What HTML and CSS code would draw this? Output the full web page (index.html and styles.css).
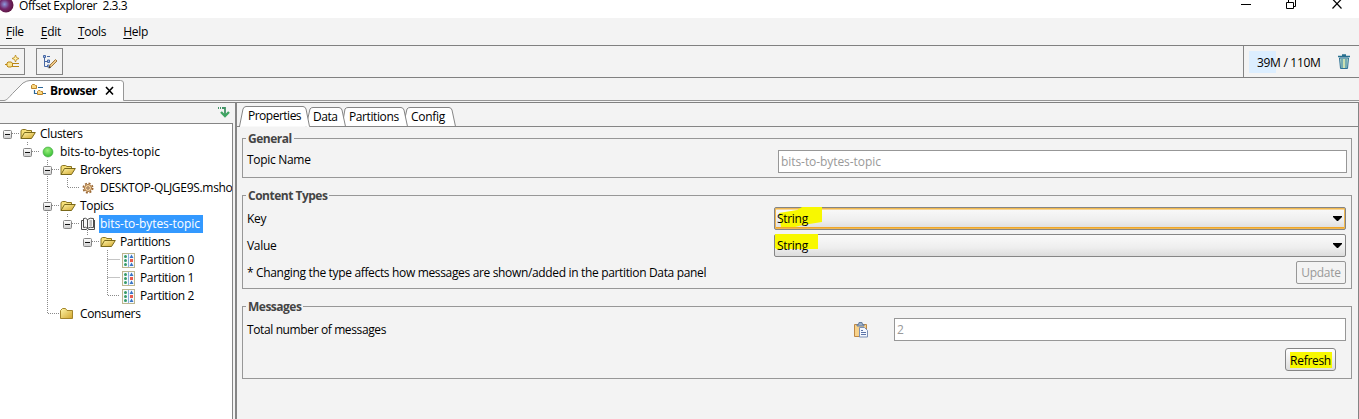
FILE: index.html
```html
<!DOCTYPE html>
<html lang="en">
<head>
<meta charset="utf-8">
<title>Offset Explorer 2.3.3</title>
<link rel="stylesheet" href="styles.css">
</head>
<body>
<svg width="0" height="0" class="defs">
  <defs>
    <linearGradient id="gold" x1="0" y1="0" x2="1" y2="1"><stop offset="0" stop-color="#fff6a8"/><stop offset="1" stop-color="#d1a52c"/></linearGradient>
    <linearGradient id="box" x1="0" y1="0" x2="0" y2="1"><stop offset="0" stop-color="#fff"/><stop offset="1" stop-color="#ccc"/></linearGradient>
    <radialGradient id="orb" cx=".4" cy=".45" r=".65"><stop offset="0" stop-color="#8d9ade"/><stop offset=".5" stop-color="#74276b"/><stop offset="1" stop-color="#571036"/></radialGradient>
    <radialGradient id="green" cx=".45" cy=".35" r=".7"><stop offset="0" stop-color="#9bf07c"/><stop offset="1" stop-color="#2eb82e"/></radialGradient>
    <symbol id="open" viewBox="0 0 16 12"><path d="M1 10.500V2.500L2.500 1.500H5.500L7 2.500H11.500V5" fill="#f5df78" stroke="#8a7420"/><path d="M1 10.500L4.500 4.500H15.300L11.500 10.500Z" fill="url(#gold)" stroke="#796819"/></symbol>
    <symbol id="closed" viewBox="0 0 14 12"><path d="M.5 10.500V2.500L2.500 .5H5.500L7 2.500H12.500V10.500Z" fill="url(#gold)" stroke="#a3852b"/></symbol>
    <symbol id="minus" viewBox="0 0 9 9"><rect x=".5" y=".5" width="8" height="8" rx="1" fill="url(#box)" stroke="#858585"/><path d="M2 4.500H7" stroke="#111"/></symbol>
    <symbol id="part" viewBox="0 0 13 15"><rect x=".5" y=".5" width="12" height="14" fill="#f6fafd" stroke="#bdb68e"/><path d="M6.500 1V14" stroke="#8bb0dc"/><g fill="#369b69"><circle cx="3.500" cy="3.500" r="1.500"/><circle cx="3.500" cy="7.500" r="1.500"/><circle cx="3.500" cy="11.500" r="1.500"/></g><path d="M9.500 1.500L11.500 5H7.500ZM9.500 9.500L11.500 13H7.500Z" fill="#3974c5"/><path d="M8 6H11V9H8Z" fill="#e85b4f"/></symbol>
  </defs>
</svg>
<div class="window">
  <header class="titlebar">
    <svg class="orb" width="16" height="18"><circle cx="6" cy="5" r="7.500" fill="url(#orb)"/></svg>
    <span class="title">Offset Explorer&nbsp; 2.3.3</span>
    <svg class="controls" width="119" height="18" fill="none" stroke="#000"><path d="M1 4.500H11"/><path d="M46.500 2.500H53.500V8.500H46.500ZM48.500 2V0M55.500 0V6.500H54"/><path d="M92.500 -1L101.500 8.500M101.500 -1L92.500 8.500" stroke-width="1.200"/></svg>
  </header>
  <nav class="menu"><span><u>F</u>ile</span><span><u>E</u>dit</span><span><u>T</u>ools</span><span><u>H</u>elp</span></nav>
  <div class="toolbar">
    <button class="tool first"><svg width="16" height="16" viewBox="0 0 16 16"><path d="M1 10.500H4M8 9.500H15M8 12.500H15" stroke="#b98618" fill="none"/><path d="M4 8H7L8.500 9V12L7 13H4L3 12V9Z" fill="#fbe58f" stroke="#b98618"/><path d="M11.500 1L12.500 3.500L15 4.500L12.500 5.500L11.500 8L10.500 5.500L8 4.500L10.500 3.500Z" fill="#fff1a8" stroke="#b98618" stroke-width=".8"/></svg></button>
    <button class="tool second"><svg width="16" height="16" viewBox="0 0 16 16"><path d="M2.500 3V12.500H6M2.500 7.500H6M5 2.500H8" stroke="#4868a4" fill="none"/><path d="M1.500 1.500H3.500V3.500H1.500ZM5.500 6H7.500V8.500H5.500ZM5.500 11H7.500V13H5.500Z" fill="#a3bde5" stroke="#4868a4"/><path d="M7 14L8 11L13.500 5.500L15 7L9.500 12.500Z" fill="#efc987" stroke="#a1793f"/><path d="M6.500 14.500L7.500 12L9 13.500Z" fill="#333"/></svg></button>
    <div class="memory"><span class="meter">39M / 110M</span><svg width="12" height="16" viewBox="0 0 12 16"><path d="M1.500 4H10.500L9.500 14.500H2.500Z" fill="#b5dacb" stroke="#2d7196"/><path d="M4 5V14M8 5V14" stroke="#397f9b"/><path d="M6 5V14" stroke="#e2e99a"/><path d="M0 2.500H12M4 1H8" stroke="#28708f" stroke-width="1.500"/></svg></div>
  </div>
  <div class="viewbar">
    <svg class="tabshape" width="1359" height="23"><path d="M4 22.500C7 22.500 10 18 14 14L23 5Q27 2.500 30 2.500H120.500Q123.500 2.500 123.500 5V22.500Z" fill="#fff"/><path d="M0 22.500H4C7 22.500 10 18 14 14L23 5Q27 2.500 30 2.500H120.500Q123.500 2.500 123.500 5V22.500H1359" fill="none" stroke="#979797"/></svg>
    <div class="viewtab"><svg class="hier" width="16" height="13" viewBox="0 0 16 13"><path d="M7 3.500H12M3.500 6V9.500H6M12 9.500H15" stroke="#2b6799" stroke-width="1.200" fill="none"/><path d="M.5 1.500L1.500 .5H3.500L4.500 1.500H5.500V4.500H.5ZM6.500 7.500L7.500 6.500H9L10 7.500H11.500V10.500H6.500Z" fill="#fbd87e" stroke="#bb832b"/></svg><b>Browser</b><svg width="10" height="10"><path d="M1 1L8 8.500M8 1L1 8.500" stroke="#000" stroke-width="1.600"/></svg></div>
  </div>
  <main class="main">
    <aside class="side">
      <div class="sidehead"><svg width="14" height="13" viewBox="0 0 14 13"><path d="M1 2H2M3 2H4M5 2H8V9" fill="none" stroke="#429365" stroke-width="1.800"/><path d="M4 6L8 10L12 6" fill="none" stroke="#3ea561" stroke-width="2.400"/></svg></div>
      <div class="tree">
        <svg class="connectors" width="231" height="200" fill="none" stroke="#8a8a8a" stroke-dasharray="1 1"><path d="M12 9.500H20M27.500 18V22M32 27.500H40M47.500 36V189.500H60M52 45.500H60M67.500 54V63.500H80M52 81.500H60M67.500 90V94M72 99.500H80M87.500 108V112M92 117.500H100M107.500 126V171.500H120M107.500 135.500H120M107.500 153.500H120"/></svg>
        <div class="row l0"><svg class="ex"><use href="#minus"/></svg><svg class="ic f"><use href="#open"/></svg><span>Clusters</span></div>
        <div class="row l1"><svg class="ex"><use href="#minus"/></svg><svg class="ic" viewBox="0 0 16 16"><circle cx="8" cy="8" r="5" fill="url(#green)" stroke="#45a745" stroke-width=".6"/></svg><span class="wide">bits-to-bytes-topic</span></div>
        <div class="row l2"><svg class="ex"><use href="#minus"/></svg><svg class="ic f"><use href="#open"/></svg><span>Brokers</span></div>
        <div class="row l3"><i class="ex"></i><svg class="ic" viewBox="0 0 16 16"><circle cx="8" cy="8" r="4.700" fill="none" stroke="#9a6732" stroke-width="1.600" stroke-dasharray="2 1.690"/><circle cx="8" cy="8" r="3.500" fill="#f6d7a5" stroke="#a36e38"/><circle cx="8" cy="8" r="1.200" fill="#fff" stroke="#8c5929"/></svg><span class="host">DESKTOP-QLJGE9S.msho</span></div>
        <div class="row l2"><svg class="ex"><use href="#minus"/></svg><svg class="ic f"><use href="#open"/></svg><span>Topics</span></div>
        <div class="row l3"><svg class="ex"><use href="#minus"/></svg><svg class="ic" viewBox="0 0 16 16"><path d="M7.500 3.500Q5.500 1.500 3.500 2.500V11.500Q5.500 10.500 7.500 12.500Q10 10.500 13.500 11.500V2.500Q10 1.500 7.500 3.500V12.500M3 4.500H1.500V13.500H6.500L7.500 14.500L8.500 13.500H14.500V4" fill="#f8f8f8" stroke="#4d4d4d"/><path d="M9.500 5H12M9.500 7H12M9.500 9H12" stroke="#888"/></svg><span class="selected wide">bits-to-bytes-topic</span></div>
        <div class="row l4"><svg class="ex"><use href="#minus"/></svg><svg class="ic f"><use href="#open"/></svg><span>Partitions</span></div>
        <div class="row l5"><i class="ex"></i><svg class="ic p"><use href="#part"/></svg><span>Partition 0</span></div>
        <div class="row l5"><i class="ex"></i><svg class="ic p"><use href="#part"/></svg><span>Partition 1</span></div>
        <div class="row l5"><i class="ex"></i><svg class="ic p"><use href="#part"/></svg><span>Partition 2</span></div>
        <div class="row l2"><i class="ex"></i><svg class="ic c"><use href="#closed"/></svg><span>Consumers</span></div>
      </div>
    </aside>
    <section class="panel">
      <div class="tabs">
        <svg class="tabshape" width="1121" height="24" stroke="#858585"><g fill="#fff"><path d="M166 23.500L170 6Q171 4.500 173 4.500H212Q214 4.500 215 7L218.500 23.500"/><path d="M105 23.500L108 6Q109 4.500 111 4.500H164Q166 4.500 167 7L170.500 23.500"/><path d="M69 23.500L73 6Q74 4.500 76 4.500H102Q104 4.500 105 7L108.500 23.500"/><path d="M2.500 23.500L6 6Q7 3.500 9 3.500H66Q68 3.500 69 6L72.500 23.500"/></g><path d="M0 23.500H3M72.500 23.500H1121" fill="none"/></svg>
        <span class="tab t1">Properties</span><span class="tab t2">Data</span><span class="tab t3">Partitions</span><span class="tab t4">Config</span>
      </div>
      <div class="groups">
        <fieldset class="general"><legend>General</legend><div class="line"><label class="topic-label">Topic Name</label><div class="input topic wide">bits-to-bytes-topic</div></div></fieldset>
        <fieldset class="types"><legend>Content Types</legend>
          <div class="line"><label>Key</label><div class="select focused"><svg class="mark" width="47" height="21"><path d="M4 6L22 3L27 0H47V15L28 18L20 20H6Z" fill="#f8f800"/></svg><span>String</span><svg class="arrow" width="9" height="5"><path d="M0 0H9V1L5 5H4L0 1Z"/></svg></div></div>
          <div class="line second-line"><label>Value</label><div class="select"><svg class="mark" width="43" height="16"><path d="M0 0H43V15H7L3 16L0 14Z" fill="#f8f800"/></svg><span>String</span><svg class="arrow" width="9" height="5"><path d="M0 0H9V1L5 5H4L0 1Z"/></svg></div></div>
          <div class="line third-line"><label class="note">* Changing the type affects how messages are shown/added in the partition Data panel</label><button class="update">Update</button></div>
        </fieldset>
        <fieldset class="messages"><legend>Messages</legend>
          <div class="line"><label class="total">Total number of messages</label><svg class="clip" width="14" height="16" viewBox="0 0 14 16"><path d="M.5 2.500H12.500V14.500H.5Z" fill="#f8d28a" stroke="#bd8745"/><path d="M3 4V2.500H4.500L5 .5H8L8.500 2.500H10V4Z" fill="#9db2cc" stroke="#667d9c"/><path d="M5.500 5.500H10.500L13.500 8.500V15H5.500Z" fill="#f4f8ff" stroke="#7a8fb5"/><path d="M7 8.500H9M7 10.500H12M7 12.500H12" stroke="#5c74a8"/></svg><div class="input count">2</div></div>
          <div class="actions"><button class="refresh"><span>Refresh</span></button></div>
        </fieldset>
      </div>
    </section>
  </main>
</div>
</body>
</html>
```
FILE: styles.css
```css
* { box-sizing: border-box; }
body { margin: 0; overflow: hidden; background: #f3f3f3; font: 12px/18px "Open Sans", "Noto Sans", sans-serif; color: #000; letter-spacing: -.3px; }
button { font: inherit; letter-spacing: inherit; padding: 0; }
svg { display: block; flex: none; }
.defs { position: absolute; }
.window { width: 1359px; height: 419px; display: flex; flex-direction: column; overflow: hidden; }
.titlebar { height: 18px; background: #fff; display: flex; flex: none; }
.title { margin: 0 auto 0 3px; line-height: 12px; letter-spacing: -.42px; }
.menu { height: 28px; flex: none; display: flex; padding: 5px 0 0 6px; border-bottom: 1px solid #808080; }
.menu span { margin-right: 17px; white-space: nowrap; }
.menu u { text-underline-offset: 2px; }
.toolbar { height: 32px; flex: none; display: flex; border-bottom: 1px solid #808080; }
.tool { background: none; border: 1px solid #858585; height: 27px; margin-top: 2px; display: grid; place-items: center; }
.first { width: 25px; border-left: 0; }
.second { width: 27px; margin-left: 11px; }
.memory { margin-left: auto; width: 116px; border-left: 1px solid #858585; display: flex; align-items: center; padding-left: 5px; gap: 12px; }
.meter { width: 77px; height: 22px; line-height: 23px; padding-left: 8px; background: linear-gradient(#dceeff, #dceeff) 0 0 / 27px 100% no-repeat; white-space: nowrap; }
.viewbar { height: 24px; flex: none; position: relative; }
.tabshape { position: absolute; left: 0; top: 0; }
.viewtab { position: relative; display: flex; align-items: center; padding: 4px 0 0 31px; height: 22px; }
.viewtab b { margin: 0 8px 0 3px; letter-spacing: -.4px; }
.hier { margin-bottom: 1px; }
.main { flex: 1; display: flex; min-height: 0; }
.side { width: 235px; flex: none; border-top: 1px solid #808080; padding-right: 2px; display: flex; flex-direction: column; }
.sidehead { height: 20px; display: flex; justify-content: flex-end; padding: 3px 2px 0 0; }
.tree { flex: 1; border: solid #858585; border-width: 1px 1px 0 0; background: #fff; position: relative; overflow: hidden; padding-top: 1px; }
.connectors { position: absolute; left: 0; top: 0; }
.row { position: relative; height: 18px; display: flex; align-items: center; white-space: nowrap; padding-left: 3px; }
.l1 { padding-left: 23px; }
.l2 { padding-left: 43px; }
.l3 { padding-left: 63px; }
.l4 { padding-left: 83px; }
.l5 { padding-left: 103px; }
.ex { width: 9px; height: 9px; flex: none; margin-right: 8px; }
.ic { width: 16px; height: 16px; margin-right: 3px; }
.ic.f { height: 12px; }
.ic.p { width: 13px; height: 15px; margin: 0 4px 0 2px; }
.ic.c { width: 14px; height: 12px; margin-right: 5px; }
.row span { padding-left: 1px; height: 18px; letter-spacing: -.35px; }
.row .wide, .wide { letter-spacing: -.07px; }
.row .host { letter-spacing: -.3px; }
.row .selected { background: #3399ff; color: #fff; width: 104px; }
.panel { flex: 1; border-top: 1px solid #808080; border-left: 2px solid #858585; border-right: 1px solid #858585; }
.tabs { height: 24px; position: relative; }
.tab { position: absolute; top: 5px; }
.t1 { left: 11px; top: 4px; letter-spacing: -.5px; }
.t2 { left: 76px; letter-spacing: -.5px; }
.t3 { left: 112px; letter-spacing: -.4px; }
.t4 { left: 174px; }
.groups { padding: 11px 6px 0 5px; display: flex; flex-direction: column; gap: 17px; }
fieldset { margin: 0; padding: 0; min-width: 0; border: 1px solid #979797; position: relative; }
legend { position: absolute; left: 3px; top: -9px; padding: 0 2px; background: #f3f3f3; font-weight: 700; color: #444; line-height: 18px; letter-spacing: -.5px; }
.general { height: 40px; padding: 11px 4px 0; }
.types { height: 94px; padding: 11px 5px 0 4px; }
.messages { height: 73px; padding: 11px 5px 0 4px; }
.line { display: flex; justify-content: space-between; height: 23px; }
.second-line, .third-line { margin-top: 4px; }
label { line-height: 23px; white-space: nowrap; }
.topic-label { line-height: 19px; }
.note { letter-spacing: -.34px; }
.total { letter-spacing: -.38px; }
.input { height: 23px; background: #fff; border: 1px solid #979797; color: #999; padding-left: 2px; line-height: 22px; }
.topic { width: 569px; }
.count { width: 452px; }
.select { width: 572px; height: 23px; border: 1px solid #858585; border-radius: 2px; position: relative; background: linear-gradient(#fafafa, #eee 60%, #dcdcdc); display: flex; padding-left: 2px; align-items: center; }
.focused { box-shadow: inset 0 0 0 1px #f0b850, inset 0 -2px 0 #f0a72a, inset 0 2px 0 #f6d69a; }
.select span { position: relative; }
.mark { position: absolute; left: 0; top: -1px; }
.arrow { margin: 0 3px 0 auto; }
.update { width: 50px; border: 1px solid #979797; border-radius: 2px; background: none; color: #999; }
.clip { margin: 4px 26px 0 auto; }
.actions { display: flex; justify-content: flex-end; padding: 7px 10px 0 0; }
.refresh { width: 51px; height: 23px; border: 1px solid #858585; border-radius: 3px; background: linear-gradient(#fff, #ddd); display: grid; place-items: center; }
.refresh span { background: #f8f800; height: 16px; line-height: 18px; width: 42px; }
```
